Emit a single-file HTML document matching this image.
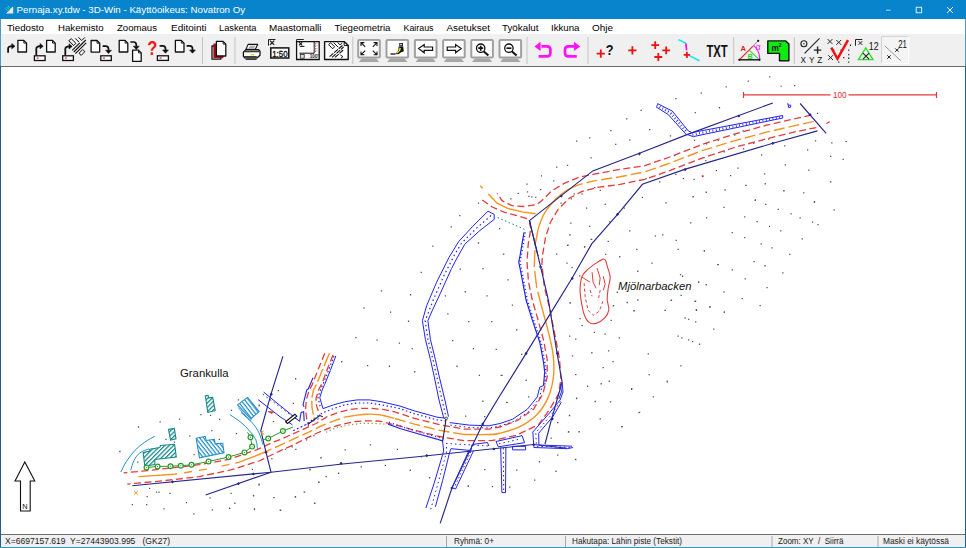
<!DOCTYPE html>
<html><head><meta charset="utf-8"><title>Pernaja.xy.tdw - 3D-Win</title>
<style>
html,body{margin:0;padding:0;background:#fff;overflow:hidden}
body{width:966px;height:548px;position:relative;font-family:"Liberation Sans",sans-serif}
#titlebar{position:absolute;left:0;top:0;width:966px;height:19px;background:#0884cd}
#menubar{position:absolute;left:1px;top:19px;width:964px;height:15px;background:#fff}
#toolbar{position:absolute;left:1px;top:34px;width:964px;height:32px;background:#f0f0f0;border-bottom:1px solid #6b6b6b}
#canvas{position:absolute;left:1px;top:67px;width:964px;height:467px;background:#fff}
#status{position:absolute;left:1px;top:534px;width:964px;height:13px;background:#f0f0f0;border-top:1px solid #6e6e6e}
#bl{position:absolute;left:0;top:19px;width:1px;height:529px;background:#1d5f85}
#bl2{position:absolute;left:0;top:19px;width:1px;height:47px;background:#4a9dc0}
#br{position:absolute;left:965px;top:19px;width:1px;height:529px;background:#1d5f85}
#br2{position:absolute;left:965px;top:19px;width:1px;height:47px;background:#4a9dc0}
#bb{position:absolute;left:0;top:547px;width:966px;height:1px;background:#2b97d0}
svg{position:absolute;left:0;top:0}
text{font-family:"Liberation Sans",sans-serif}
</style></head><body>
<div id="titlebar"></div><div id="menubar"></div><div id="toolbar"></div><div id="canvas"></div><div id="status"></div>
<div id="bl"></div><div id="bl2"></div><div id="br"></div><div id="br2"></div><div id="bb"></div>
<svg width="966" height="548" viewBox="0 0 966 548">
<defs>
<pattern id="hT" width="3.1" height="3.1" patternUnits="userSpaceOnUse" patternTransform="rotate(-45)"><rect width="3.1" height="1.25" fill="#188a8a"/></pattern>
<pattern id="hB" width="3.1" height="3.1" patternUnits="userSpaceOnUse" patternTransform="rotate(52)"><rect width="3.1" height="1.25" fill="#2490c8"/></pattern>
</defs>
<g id="map">
<polyline points="813.8,121.4 793.9,125.9 766.6,132.1 734.3,140.8 702,150.7 669.7,163.2 644.8,171.9 620,176.8 594,180.9 579.1,184.6" fill="none" stroke="#f39420" stroke-width="1.4" stroke-dasharray="11 4"/>
<path d="M579.1 184.6C576.6 185.8 568.8 188.9 564.2 192.0C559.7 195.1 555.3 199.2 551.8 203.2C548.3 207.1 545.4 211.3 543.1 215.7C540.8 220.0 538.9 227.0 538.1 229.3" fill="none" stroke="#f39420" stroke-width="1.4"/>
<polyline points="538.1,229.3 535.2,244.2 534.2,266.9 536.7,287.3 541.9,307.8" fill="none" stroke="#f39420" stroke-width="1.4" stroke-dasharray="17 4"/>
<path d="M541.9 307.8C543.2 312.7 547.8 329.1 549.7 337.3C551.6 345.5 552.8 350.5 553.4 357.1C554.0 363.7 554.2 370.4 553.4 377.0C552.6 383.6 551.1 390.7 548.4 396.9C545.7 403.1 542.0 409.3 537.3 414.3C532.5 419.3 526.1 423.6 519.9 426.7C513.7 429.8 505.2 431.9 500.0 433.2C494.8 434.5 494.9 434.3 488.9 434.5C482.9 434.7 468.2 434.5 464.1 434.5" fill="none" stroke="#f39420" stroke-width="1.4"/>
<polyline points="464.1,434.5 439.3,430.3 414.4,424.1 394.3,418.3" fill="none" stroke="#f39420" stroke-width="1.4" stroke-dasharray="11 4"/>
<path d="M394.3 418.3C391.8 417.7 383.9 415.5 379.4 414.8C374.8 414.1 371.1 414.1 367.0 414.2C362.9 414.3 356.6 415.3 354.5 415.5" fill="none" stroke="#f39420" stroke-width="1.4"/>
<polyline points="354.5,415.5 344.6,417.1 333.4,421.1 321,426 309.8,431.6 294.9,438.4 280,445.3 261.5,453.5" fill="none" stroke="#f39420" stroke-width="1.4" stroke-dasharray="11 4"/>
<polyline points="261.5,453.5 239.1,462.2" fill="none" stroke="#f39420" stroke-width="1.4"/>
<polyline points="239.1,462.2 211.8,468.4" fill="none" stroke="#f39420" stroke-width="1.4" stroke-dasharray="4 6 8 100"/>
<polyline points="211.8,468.4 174.5,474.2" fill="none" stroke="#f39420" stroke-width="1.4" stroke-dasharray="0 5 8 7 8 7 8 100"/>
<polyline points="174.5,474.2 138.5,476.6" fill="none" stroke="#f39420" stroke-width="1.4"/>
<polyline points="811.3,115.2 793.9,118.9 766.6,125.2 734.3,134.1 702,144.5 669.7,157 644.8,165.7 620,169.4 594,174.2 579.1,177.1 564.2,183.4 551.8,190.8 544.3,198.3 536.9,204.5 524.5,206.5 512,205.7 502.1,200.7 497.1,193.3" fill="none" stroke="#e53c3c" stroke-width="1.3" stroke-dasharray="7 3.5"/>
<polyline points="816.3,127.6 793.9,132.1 766.6,138.8 734.3,147.5 702,158.2 669.7,170.6 644.8,179.3 620,184.3 596.5,187.6 581.6,191.6 569.2,198.3 558,209.4 550.6,221.9 545.6,236.8 542.4,255.9 541.9,264.3 544.4,287.3 549.5,307.8 555.9,339.8 559.6,359.6 560.9,379.5 558.4,394.4 549.7,409.3 538.6,424.6 516.3,435.3 491.4,440.7 464.1,440.7 439.3,436.5 414.4,430.3 400,426 391.8,424.2 379.4,421.1 367,420.8 354.5,421.7 342.1,424.2 329.7,427.9 316,433.5 304.8,439.1 292.4,445.3 280,450.9 259,461 231.7,469.7 199.4,476.6 162.1,480.9 127.3,484.1" fill="none" stroke="#e53c3c" stroke-width="1.3" stroke-dasharray="7 3.5"/>
<polyline points="482.2,200 492.2,207 504.6,212.4 519.5,216.4 529.4,219.4 530.7,229.3 528.2,244.2 527,262 528.5,282 532.3,300 537.3,317.4 543.5,339.8 547.2,359.6 547.2,377 542.7,394.4 533.5,409.3 517.4,420.5 500,427 488.9,429.1 464.1,429.1 439.3,424.6 414.4,418.4 395.5,412.1 384.3,409.6 371.9,408.4 359.5,408.4 349.6,409.6 338.4,412.4 327.2,416.7 316,423.5 303.6,429.1 292.4,434.1 280,439.7 273.9,441.9 256.5,449.8 229.2,459.3 199.4,464.7 149.7,470.4 123.6,472.9" fill="none" stroke="#e53c3c" stroke-width="1.3" stroke-dasharray="7 3.5"/>
<polyline points="826.2,123.4 829.9,121.7" fill="none" stroke="#e53c3c" stroke-width="1.1"/>
<polyline points="480.2,185.8 482.7,188.3" fill="none" stroke="#f39420" stroke-width="1.4"/>
<polyline points="488.4,194 497.1,203.2 507.1,208.2 522,211.9 535.7,213.7" fill="none" stroke="#f39420" stroke-width="1.4"/>
<polyline points="538.1,255.9 529.4,220.6 592.8,170.9 638.8,153.5 688.3,134.1 772.8,103" fill="none" stroke="#26268c" stroke-width="1.15"/>
<polyline points="529.4,220.6 540.6,266.9 548.4,300 557.1,353.4 562.1,382 550.9,421.7 545,444" fill="none" stroke="#26268c" stroke-width="1.15"/>
<polyline points="817.5,130.9 772.8,143.3 684.6,169.4 642.4,184.3 617.6,214.4 591.7,243.9 572,278.2 550.8,312.9 526.1,353.4 497.2,400 482.7,424.1 452,487.8 440.2,523.4" fill="none" stroke="#26268c" stroke-width="1.15"/>
<polyline points="800.1,103.5 826.2,133.4" fill="none" stroke="#26268c" stroke-width="1.15"/>
<polyline points="132.3,485.8 271,472.2 340,464.2 420,456.5 533.7,444.5 567,448.3" fill="none" stroke="#26268c" stroke-width="1.15"/>
<polyline points="205.6,495 271,472.2" fill="none" stroke="#26268c" stroke-width="1.15"/>
<polyline points="282.9,356.3 271,394.2 260.8,430.5 266,452.4 271,472.2" fill="none" stroke="#26268c" stroke-width="1.15"/>
<polyline points="656,106.8 668.4,114.7 685.8,134.1 693.3,136.6 782.7,118 782.7,115.5 692,132.6 688.3,130.9 672.2,111 657.3,103.5" fill="none" stroke="#2424ea" stroke-width="1"/>
<polyline points="656.8,105.2 670.3,112.8 687.3,132.6" fill="none" stroke="#2424ea" stroke-width="2.6" stroke-dasharray="0.8 2.4"/>
<polyline points="692.5,134.7 782,116.8" fill="none" stroke="#2424ea" stroke-width="2.4" stroke-dasharray="0.8 2.6"/>
<polyline points="787.8,103.2 788.6,107.5 790.6,107.2 790.8,105.2 788.2,105" fill="none" stroke="#2424ea" stroke-width="1"/>
<polyline points="488,211.2 472.3,226.8 458.6,241.7 449,257.4 436.6,282.2 426.6,305.8 422.4,320.7 425.4,339.4 430.4,359.3 434.1,376 439,400 443.7,417.8" fill="none" stroke="#2424ea" stroke-width="1"/>
<polyline points="488,211.2 494.2,214.4 494.2,219.4 479.8,230.6 464.8,244.2 457,258 451.5,268.6 440.3,293.4 431.6,312 427.9,320.7 430.4,339.4 435.3,359.3 439.1,376 444.9,400 448.5,416.6" fill="none" stroke="#2424ea" stroke-width="1"/>
<polyline points="491,215.5 476,228.7 461.7,243 455.2,253.6 444,275.4 433.4,299.6 425.2,320.7 427.9,339.4 432.9,359.3 436.6,376 442,400 446.1,417.2" fill="none" stroke="#2424ea" stroke-width="1.2" stroke-dasharray="1.5 3"/>
<polyline points="497.6,217.6 524.5,229.3" fill="none" stroke="#188a8a" stroke-width="1" stroke-dasharray="1.5 2.5"/>
<polyline points="524,232.3 520,255.9 518.8,262 522.7,282.2 526.1,300 532.3,319.9 539.8,342.2 543.5,362.1 544.7,372 543.5,385.7" fill="none" stroke="#2424ea" stroke-width="1.2"/>
<polyline points="525.2,232.3 521.2,255.9 520,262 523.9,282.2 527.3,300 533.5,319.9 541,342.2 544.7,362.1 545.9,372 544.7,385.7" fill="none" stroke="#2424ea" stroke-width="1.6" stroke-dasharray="1 2.6"/>
<polyline points="543.5,385.7 539.8,387 537.3,396.9 527.3,409.3 512.4,419.3 500,423.5 488.9,425.8 469.1,425.1 449.7,422.6" fill="none" stroke="#2424ea" stroke-width="1"/>
<polyline points="541.5,388.5 539.6,398 529.5,411 514,421.4 500,426 488.9,428 469.1,427.5 449.7,425" fill="none" stroke="#2424ea" stroke-width="1" stroke-dasharray="1.5 3"/>
<polyline points="446.7,418.4 436.8,417.1 414.4,410.9 400,406.1 381.9,401.8 369.4,399.9 357,399.9 344.6,401.8 333.4,404.9 322.9,408.6 319.8,397.5 322.2,390 324.8,384.2 330.3,370.5 335.8,355.9" fill="none" stroke="#2424ea" stroke-width="1"/>
<polyline points="446,421 436.5,419.8 414,413.6 400,408.6 381.9,404.9 369.4,403 357,403 344.6,404.9 333.4,408.6 322.2,413 305,425 294,430.3" fill="none" stroke="#2424ea" stroke-width="1.2" stroke-dasharray="1.5 2.5"/>
<polyline points="334,356 328.5,370.5 323,384.2 320.5,390 318,397.5 320.5,408" fill="none" stroke="#2424ea" stroke-width="1.2" stroke-dasharray="1.5 2.5"/>
<polyline points="313,377.8 308.4,388.8 306.7,390 303,404.9 304.2,406.8" fill="none" stroke="#2424ea" stroke-width="1.1"/>
<polyline points="299.5,421.7 301.1,412.4 303.6,411.7 304.2,421.1" fill="none" stroke="#2424ea" stroke-width="1.1"/>
<polyline points="324.8,353.2 318.4,368.7 312,385.1 309.2,390 306.3,399.9 305.5,409.9 306.7,418.6 308.6,426" fill="none" stroke="#e53c3c" stroke-width="1.3" stroke-dasharray="7 3.5"/>
<polyline points="329.4,353.2 323,368.7 316.6,384.2 313.5,390 311.7,398.7 312,407.4 314.2,419.8" fill="none" stroke="#f39420" stroke-width="1.4" stroke-dasharray="14 3"/>
<polyline points="333,355 327.5,368.7 322.1,383.3 318.5,390 316,398.7 316.6,406.1 319.8,414.8" fill="none" stroke="#e53c3c" stroke-width="1.3" stroke-dasharray="7 3.5"/>
<polyline points="308,424.2 319.8,415.5 322.9,416.7" fill="none" stroke="#1a1a4a" stroke-width="1.1"/>
<polyline points="388.1,424.2 400,428.5 411.9,432 436.8,439 443,441.2" fill="none" stroke="#2424ea" stroke-width="1.3"/>
<polyline points="389.1,422.2 401,426.5 412.9,430 437.8,437 444,439.2" fill="none" stroke="#2424ea" stroke-width="1.4" stroke-dasharray="1 3"/>
<polyline points="326,432.2 335.9,427.9 347.1,425.4 359.5,423.5 371.9,423.3 386.8,424.2" fill="none" stroke="#8aa03a" stroke-width="1.2" stroke-dasharray="1.3 2.6"/>
<polyline points="446.1,419 442.6,441.5" fill="none" stroke="#1a1a4a" stroke-width="1.1"/>
<circle cx="446.3" cy="418.3" r="1.3" fill="#fff" stroke="#222" stroke-width=".8"/>
<polyline points="442.6,441.5 443.7,451 434.2,483.1 425.9,508" fill="none" stroke="#2424ea" stroke-width="1"/>
<polyline points="450.9,448.7 449.7,452.2 442.6,480.7 435.4,506.8" fill="none" stroke="#2424ea" stroke-width="1"/>
<polyline points="446.5,447 446.5,452 438.4,482 430,512" fill="none" stroke="#2424ea" stroke-width="1" stroke-dasharray="1.5 3"/>
<polyline points="450.9,448.7 471,450.5 472,444.5 487.5,442.5 488.8,446" fill="none" stroke="#2424ea" stroke-width="1"/>
<polyline points="446,443.5 488,446" fill="none" stroke="#2424ea" stroke-width="1" stroke-dasharray="1.5 3"/>
<polyline points="468.7,451 452,487.8 455.6,489 473.4,451" fill="none" stroke="#2424ea" stroke-width="1"/>
<polyline points="471,451.5 454,488" fill="none" stroke="#2424ea" stroke-width="1" stroke-dasharray="1.5 2.5"/>
<polyline points="500.7,447.5 501.9,492.6 505.5,492.6 505.9,447.5" fill="none" stroke="#2424ea" stroke-width="1"/>
<polyline points="503.3,448 503.7,492" fill="none" stroke="#2424ea" stroke-width="1" stroke-dasharray="1.5 3"/>
<polygon points="496,441.5 522.1,435.6 524.5,442.7 498.3,446.8" fill="none" stroke="#2424ea" stroke-width="1"/>
<polyline points="499,443.8 521,438.8" fill="none" stroke="#2424ea" stroke-width="1" stroke-dasharray="1.5 3"/>
<polygon points="512.6,446.3 525.6,446.3 525.6,449.9 512.6,449.9" fill="none" stroke="#2424ea" stroke-width="1"/>
<polyline points="560.1,400 549.4,413.1 532.8,432 533.9,447.5 567.2,448.7 573.1,447.5" fill="none" stroke="#2424ea" stroke-width="1"/>
<polyline points="561.2,402.4 552.9,416.6 538.7,433.2 538.9,445 572,446.2" fill="none" stroke="#2424ea" stroke-width="1"/>
<polyline points="560.5,401.5 551.2,415 535.8,432.6 536.4,446.3 570,447.4" fill="none" stroke="#2424ea" stroke-width="1" stroke-dasharray="1.5 3"/>
<polyline points="562.1,382 563,392 560.1,400" fill="none" stroke="#2424ea" stroke-width="1"/>
<polyline points="560.6,384 561.4,392 558.8,399" fill="none" stroke="#2424ea" stroke-width="1"/>
<polyline points="263.7,392.1 280,405.5 299.3,421.1" fill="none" stroke="#2424ea" stroke-width="1"/>
<polyline points="258.2,399.7 280,416.7 292.4,424.8" fill="none" stroke="#2424ea" stroke-width="1"/>
<polyline points="262.8,394.2 298.4,420.7" fill="none" stroke="#2424ea" stroke-width="1" stroke-dasharray="1.5 3"/>
<polyline points="292.9,430.7 320.2,418" fill="none" stroke="#2424ea" stroke-width="1" stroke-dasharray="1.5 3"/>
<polygon points="285.6,421.7 294.9,414.2 296.8,416.1 287.5,423.5" fill="#fff" stroke="#111" stroke-width="1.1"/>
<path d="M268 411.5l4 2 1.5-1.5z" fill="#e03030" stroke="#e03030" stroke-width=".8"/>
<path d="M261.5 432.5l2.5 1.5M261.5 432.5l2.3-1.5M261.5 432.5l1 3" stroke="#f39420" stroke-width="1" fill="none"/>
<path d="M134.2 491l3.6 3.6M137.8 491l-3.6 3.6" stroke="#f39420" stroke-width="1" fill="none"/>
<rect x="701.8" y="175.3" width="1.8" height="1.8" fill="#e02020"/>
<rect x="780.6" y="85.6" width="1.2" height="1.2" fill="#5050e0"/>
<polygon points="205.3,395.8 208.1,395.3 208.6,397.9 212.7,397.4 215.2,410.7 207.8,412.3" fill="url(#hT)" stroke="#188a8a" stroke-width="1.1"/>
<polygon points="237.6,404.9 247.5,397.4 259.1,411.5 250.8,419" fill="url(#hB)" stroke="#2490c8" stroke-width="1.1"/>
<polyline points="238.2,407.5 250,420.6 251.5,419.4" fill="none" stroke="#2490c8" stroke-width="1"/>
<polygon points="168.5,429.4 174.3,428.4 176,438.8 170.5,440" fill="url(#hT)" stroke="#188a8a" stroke-width="1.1"/>
<polygon points="143.2,452.6 149,451.3 149.8,449.3 159.7,447.6 160.5,445.5 174.6,444.3 176.3,457 154.8,459.5 154.8,464.5 144.8,466.2" fill="url(#hT)" stroke="#188a8a" stroke-width="1.1"/>
<polygon points="196.2,438.3 205.3,436.3 206.1,440.5 214.4,439.3 215.2,443.8 222.7,443.3 224,452.9 199.5,457.9" fill="url(#hB)" stroke="#2490c8" stroke-width="1.1"/>
<polyline points="144.8,467.8 157.2,466.5 170.5,466.2 180.8,465.7 191.5,464.8 208.6,461.5 228.5,457 244.5,452.4 252.1,446.6 250.5,437.2 247.5,432.2" fill="none" stroke="#2a9a2a" stroke-width="1"/>
<polyline points="262.8,439.8 268.3,438.4 282.9,431.1 292.9,427.1" fill="none" stroke="#2a9a2a" stroke-width="1"/>
<circle cx="146.5" cy="467.5" r="2.4" fill="#fff" stroke="#2a9a2a" stroke-width="1.2"/><circle cx="146.5" cy="467.5" r=".6" fill="#2a9a2a"/>
<circle cx="157.6" cy="466.5" r="2.4" fill="#fff" stroke="#2a9a2a" stroke-width="1.2"/><circle cx="157.6" cy="466.5" r=".6" fill="#2a9a2a"/>
<circle cx="170.5" cy="466.2" r="2.4" fill="#fff" stroke="#2a9a2a" stroke-width="1.2"/><circle cx="170.5" cy="466.2" r=".6" fill="#2a9a2a"/>
<circle cx="180.8" cy="465.7" r="2.4" fill="#fff" stroke="#2a9a2a" stroke-width="1.2"/><circle cx="180.8" cy="465.7" r=".6" fill="#2a9a2a"/>
<circle cx="191.5" cy="464.8" r="2.4" fill="#fff" stroke="#2a9a2a" stroke-width="1.2"/><circle cx="191.5" cy="464.8" r=".6" fill="#2a9a2a"/>
<circle cx="208.6" cy="461.5" r="2.4" fill="#fff" stroke="#2a9a2a" stroke-width="1.2"/><circle cx="208.6" cy="461.5" r=".6" fill="#2a9a2a"/>
<circle cx="228.5" cy="457" r="2.4" fill="#fff" stroke="#2a9a2a" stroke-width="1.2"/><circle cx="228.5" cy="457" r=".6" fill="#2a9a2a"/>
<circle cx="244.5" cy="452.4" r="2.4" fill="#fff" stroke="#2a9a2a" stroke-width="1.2"/><circle cx="244.5" cy="452.4" r=".6" fill="#2a9a2a"/>
<circle cx="252.1" cy="446.6" r="2.4" fill="#fff" stroke="#2a9a2a" stroke-width="1.2"/><circle cx="252.1" cy="446.6" r=".6" fill="#2a9a2a"/>
<circle cx="250.5" cy="437.2" r="2.4" fill="#fff" stroke="#2a9a2a" stroke-width="1.2"/><circle cx="250.5" cy="437.2" r=".6" fill="#2a9a2a"/>
<circle cx="268.2" cy="438.5" r="2.4" fill="#fff" stroke="#2a9a2a" stroke-width="1.2"/><circle cx="268.2" cy="438.5" r=".6" fill="#2a9a2a"/>
<circle cx="282.9" cy="431.1" r="2.4" fill="#fff" stroke="#2a9a2a" stroke-width="1.2"/><circle cx="282.9" cy="431.1" r=".6" fill="#2a9a2a"/>
<path d="M120.8 472C121.8 470.2 124.2 464.8 126.6 461.2C128.9 457.6 131.9 453.6 134.9 450.4C137.9 447.2 141.5 444.5 144.8 442.1C148.1 439.8 153.1 437.3 154.8 436.3" fill="none" stroke="#2490c8" stroke-width="1"/>
<path d="M130.7 470.3C131.2 468.6 132.5 463.3 134.0 460.4C135.5 457.5 137.3 454.8 139.8 452.9C142.3 451.0 147.5 449.5 149.0 448.8" fill="none" stroke="#2490c8" stroke-width="1"/>
<path d="M230.1 414.8C231.9 416.1 237.7 419.7 240.9 422.3C244.1 424.9 246.7 427.6 249.2 430.5C251.7 433.4 254.4 436.6 255.8 439.7C257.2 442.8 257.1 447.3 257.4 448.8" fill="none" stroke="#2490c8" stroke-width="1"/>
<path d="M240.9 412.3C242.8 414.1 249.5 419.7 252.5 423.1C255.5 426.6 257.4 429.4 259.1 433.0C260.8 436.6 262.3 442.7 262.9 444.6" fill="none" stroke="#2490c8" stroke-width="1"/>
<path d="M603.2 259.1C601.6 259.4 598.6 261.4 596.1 263.1C593.6 264.8 590.4 267.0 588.1 269.2C585.8 271.4 583.4 273.0 582.1 276.2C580.8 279.4 580.3 284.2 580.1 288.2C579.9 292.2 580.4 295.9 581.1 300.3C581.8 304.7 582.8 310.6 584.1 314.3C585.4 318.0 587.1 320.9 589.1 322.4C591.1 323.9 593.6 324.1 596.1 323.4C598.6 322.7 602.1 320.6 604.2 318.4C606.3 316.2 608.3 313.5 608.8 310.3C609.3 307.1 607.3 303.0 607.2 299.3C607.1 295.6 607.7 291.9 608.2 288.2C608.7 284.5 610.4 280.9 610.2 277.2C610.0 273.5 607.9 268.8 607.2 266.1C606.5 263.4 606.5 262.3 605.8 261.1C605.1 259.9 604.8 258.8 603.2 259.1Z" fill="none" stroke="#e53c3c" stroke-width="1.1"/>
<polyline points="584.1,283.2 585.1,296.3 588.1,310.3 593.1,315.3 599.2,311.3 603.2,300.3" fill="none" stroke="#e53c3c" stroke-width="1" stroke-dasharray="3 2.5"/>
<polyline points="592.1,272.2 593.1,282.2 596.1,288.2" fill="none" stroke="#e53c3c" stroke-width="1"/>
<polyline points="597.1,268.2 600.2,278.2 599.2,285.2" fill="none" stroke="#e53c3c" stroke-width="1"/>
<polyline points="603.2,276.2 605.2,284.2 603.2,290.2" fill="none" stroke="#e53c3c" stroke-width="1"/>
<polyline points="582.1,277.2 590.1,282.2" fill="none" stroke="#e53c3c" stroke-width="1"/>
<polyline points="590.1,290.2 592.1,296.3" fill="none" stroke="#e53c3c" stroke-width="1" stroke-dasharray="3 2"/>
<polyline points="600.2,290.2 598.2,300.3" fill="none" stroke="#e53c3c" stroke-width="1" stroke-dasharray="3 2"/>
<polyline points="743.5,94.8 830.5,94.8" fill="none" stroke="#e03a3a" stroke-width="1.2"/>
<polyline points="848.5,94.8 936.5,94.8" fill="none" stroke="#e03a3a" stroke-width="1.2"/>
<polyline points="743.5,92 743.5,98" fill="none" stroke="#e03a3a" stroke-width="1.2"/>
<polyline points="936.5,92 936.5,98" fill="none" stroke="#e03a3a" stroke-width="1.2"/>
<path d="M24.8 462L15 481H20.5V511H30.2V481H34.8Z" fill="none" stroke="#111" stroke-width="1.1"/>
<path d="M639.4 152.2l1.6 1.6l-1.6 1.6l-1.6-1.6zM738.8 114.4l1.6 1.6l-1.6 1.6l-1.6-1.6zM685.1 168l1.6 1.6l-1.6 1.6l-1.6-1.6zM772.8 141.7l1.6 1.6l-1.6 1.6l-1.6-1.6zM810 113.1l1.6 1.6l-1.6 1.6l-1.6-1.6zM561.3 194.4l1.6 1.6l-1.6 1.6l-1.6-1.6zM617.5 212.7l1.6 1.6l-1.6 1.6l-1.6-1.6zM540.6 265.3l1.6 1.6l-1.6 1.6l-1.6-1.6zM572.3 276.7l1.6 1.6l-1.6 1.6l-1.6-1.6zM526.1 351.8l1.6 1.6l-1.6 1.6l-1.6-1.6zM557.4 351.8l1.6 1.6l-1.6 1.6l-1.6-1.6zM341.1 461.7l1.6 1.6l-1.6 1.6l-1.6-1.6zM426.8 454l1.6 1.6l-1.6 1.6l-1.6-1.6zM469 449.8l1.6 1.6l-1.6 1.6l-1.6-1.6zM493.9 447.4l1.6 1.6l-1.6 1.6l-1.6-1.6zM482.7 422.5l1.6 1.6l-1.6 1.6l-1.6-1.6zM451.9 486.4l1.6 1.6l-1.6 1.6l-1.6-1.6zM552.3 417.3l1.6 1.6l-1.6 1.6l-1.6-1.6zM533.7 442.9l1.6 1.6l-1.6 1.6l-1.6-1.6zM172.5 480.2l1.6 1.6l-1.6 1.6l-1.6-1.6zM238.4 482.1l1.6 1.6l-1.6 1.6l-1.6-1.6zM253.3 472.4l1.6 1.6l-1.6 1.6l-1.6-1.6zM266 450.7l1.6 1.6l-1.6 1.6l-1.6-1.6zM271.3 392.6l1.6 1.6l-1.6 1.6l-1.6-1.6z" fill="#26268c"/>
<path d="M119.2 451h1.3v1.3h-1.3zM119.3 450.7h1.3v1.3h-1.3zM131.7 503.9h1.3v1.3h-1.3zM137.2 461.4h1.3v1.3h-1.3zM137.8 426.4h1.3v1.3h-1.3zM138 426.2h1.3v1.3h-1.3zM146 503.9h1.3v1.3h-1.3zM146.5 495.9h1.3v1.3h-1.3zM149 487.7h1.3v1.3h-1.3zM155.9 491.4h1.3v1.3h-1.3zM158.4 491.4h1.3v1.3h-1.3zM159.5 421.2h1.3v1.3h-1.3zM163.4 508.2h1.3v1.3h-1.3zM165.3 438.7h1.3v1.3h-1.3zM169.4 492.7h1.3v1.3h-1.3zM173.7 441.5h1.3v1.3h-1.3zM178.9 418.4h1.3v1.3h-1.3zM185.8 501.9h1.3v1.3h-1.3zM189.2 435.4h1.3v1.3h-1.3zM193.2 513.2h1.3v1.3h-1.3zM193.5 454h1.3v1.3h-1.3zM200.2 413.9h1.3v1.3h-1.3zM209.4 497.2h1.3v1.3h-1.3zM209.9 414.7h1.3v1.3h-1.3zM211.2 429.9h1.3v1.3h-1.3zM211.7 509.2h1.3v1.3h-1.3zM218.7 438.7h1.3v1.3h-1.3zM219 418.7h1.3v1.3h-1.3zM229 507.6h1.3v1.3h-1.3zM230.5 492.7h1.3v1.3h-1.3zM230.8 409.7h1.3v1.3h-1.3zM234.2 502.6h1.3v1.3h-1.3zM235.8 432.9h1.3v1.3h-1.3zM237.8 399.2h1.3v1.3h-1.3zM251.8 468.7h1.3v1.3h-1.3zM252.8 494.7h1.3v1.3h-1.3zM253 495.2h1.3v1.3h-1.3zM253.8 508.9h1.3v1.3h-1.3zM253.8 508.2h1.3v1.3h-1.3zM258.4 484.5h1.3v1.3h-1.3zM258.5 405.1h1.3v1.3h-1.3zM258.5 483.6h1.3v1.3h-1.3zM258.6 404.6h1.3v1.3h-1.3zM271.2 458h1.3v1.3h-1.3zM272.8 421h1.3v1.3h-1.3zM273.2 496.9h1.3v1.3h-1.3zM273.4 497h1.3v1.3h-1.3zM277.7 390h1.3v1.3h-1.3zM279.6 509.6h1.3v1.3h-1.3zM280 509.6h1.3v1.3h-1.3zM284.9 448.8h1.3v1.3h-1.3zM291.6 446.2h1.3v1.3h-1.3zM292.7 402.8h1.3v1.3h-1.3zM294.6 496h1.3v1.3h-1.3zM294.9 496.4h1.3v1.3h-1.3zM295 378.1h1.3v1.3h-1.3zM295.2 448.8h1.3v1.3h-1.3zM303.6 491.4h1.3v1.3h-1.3zM304 491.5h1.3v1.3h-1.3zM306 439.2h1.3v1.3h-1.3zM309.2 469.1h1.3v1.3h-1.3zM309.5 468.7h1.3v1.3h-1.3zM313.2 434.9h1.3v1.3h-1.3zM313.9 502.7h1.3v1.3h-1.3zM314.2 502.6h1.3v1.3h-1.3zM318 481.5h1.3v1.3h-1.3zM318.4 481.6h1.3v1.3h-1.3zM320.1 457.2h1.3v1.3h-1.3zM320.5 457.2h1.3v1.3h-1.3zM325.5 476h1.3v1.3h-1.3zM325.6 475.9h1.3v1.3h-1.3zM337.9 472.8h1.3v1.3h-1.3zM338 472.4h1.3v1.3h-1.3zM341.1 361.1h1.3v1.3h-1.3zM344.5 449.2h1.3v1.3h-1.3zM355.2 337h1.3v1.3h-1.3zM360.6 466.2h1.3v1.3h-1.3zM363.4 307.2h1.3v1.3h-1.3zM366.9 364.9h1.3v1.3h-1.3zM369.8 444.2h1.3v1.3h-1.3zM376.4 339.5h1.3v1.3h-1.3zM380.8 290.2h1.3v1.3h-1.3zM384.7 464.7h1.3v1.3h-1.3zM388.8 365.6h1.3v1.3h-1.3zM390 311.4h1.3v1.3h-1.3zM396.7 448.8h1.3v1.3h-1.3zM398.7 342.5h1.3v1.3h-1.3zM407.9 320.6h1.3v1.3h-1.3zM409.6 469.6h1.3v1.3h-1.3zM409.9 294.1h1.3v1.3h-1.3zM411.6 348h1.3v1.3h-1.3zM414.1 371.1h1.3v1.3h-1.3zM420.6 271.7h1.3v1.3h-1.3zM420.8 456.2h1.3v1.3h-1.3zM428.9 477h1.3v1.3h-1.3zM429 477.1h1.3v1.3h-1.3zM432.2 245.5h1.3v1.3h-1.3zM444.7 295.2h1.3v1.3h-1.3zM447.2 313.2h1.3v1.3h-1.3zM450.6 226.2h1.3v1.3h-1.3zM452.1 340h1.3v1.3h-1.3zM456.4 365.6h1.3v1.3h-1.3zM459.2 215h1.3v1.3h-1.3zM459.6 268.5h1.3v1.3h-1.3zM464.6 291.1h1.3v1.3h-1.3zM465 415.5h1.3v1.3h-1.3zM467.5 485.2h1.3v1.3h-1.3zM467.6 485.6h1.3v1.3h-1.3zM468.2 320.9h1.3v1.3h-1.3zM472.8 348h1.3v1.3h-1.3zM477.7 242.5h1.3v1.3h-1.3zM477.9 202.5h1.3v1.3h-1.3zM477.9 242.3h1.3v1.3h-1.3zM478.7 374.8h1.3v1.3h-1.3zM482.2 400.6h1.3v1.3h-1.3zM482.4 268h1.3v1.3h-1.3zM484 416h1.3v1.3h-1.3zM484.2 469h1.3v1.3h-1.3zM486.4 295.2h1.3v1.3h-1.3zM491.1 320.9h1.3v1.3h-1.3zM491.8 486h1.3v1.3h-1.3zM495.6 348.7h1.3v1.3h-1.3zM499 227.9h1.3v1.3h-1.3zM500.6 374.8h1.3v1.3h-1.3zM501.4 374.7h1.3v1.3h-1.3zM502.8 253.5h1.3v1.3h-1.3zM503.1 253.5h1.3v1.3h-1.3zM506 401.8h1.3v1.3h-1.3zM506.4 402h1.3v1.3h-1.3zM507.5 279.2h1.3v1.3h-1.3zM509.1 486.5h1.3v1.3h-1.3zM510.2 198.3h1.3v1.3h-1.3zM511.8 304.4h1.3v1.3h-1.3zM511.8 304.5h1.3v1.3h-1.3zM516 329.2h1.3v1.3h-1.3zM516.2 329.2h1.3v1.3h-1.3zM516.2 469.4h1.3v1.3h-1.3zM517.6 192.7h1.3v1.3h-1.3zM521 353.7h1.3v1.3h-1.3zM525.5 379.6h1.3v1.3h-1.3zM526.4 183.4h1.3v1.3h-1.3zM526.9 191.3h1.3v1.3h-1.3zM528 396.2h1.3v1.3h-1.3zM528.2 195.8h1.3v1.3h-1.3zM531.2 196.3h1.3v1.3h-1.3zM534.1 479.4h1.3v1.3h-1.3zM535.1 196.8h1.3v1.3h-1.3zM538.8 461.1h1.3v1.3h-1.3zM540 188.9h1.3v1.3h-1.3zM540.8 175.2h1.3v1.3h-1.3zM550.6 437.4h1.3v1.3h-1.3zM553.1 180.2h1.3v1.3h-1.3zM555.4 470.6h1.3v1.3h-1.3zM556.1 166.5h1.3v1.3h-1.3zM556.1 253.5h1.3v1.3h-1.3zM557 421.9h1.3v1.3h-1.3zM557.1 422h1.3v1.3h-1.3zM557.1 454.5h1.3v1.3h-1.3zM560.4 202.5h1.3v1.3h-1.3zM566.4 262.5h1.3v1.3h-1.3zM566.9 164.8h1.3v1.3h-1.3zM566.9 244.8h1.3v1.3h-1.3zM567.4 244.4h1.3v1.3h-1.3zM567.8 431.4h1.3v1.3h-1.3zM568.1 431.1h1.3v1.3h-1.3zM568.1 431.1h1.3v1.3h-1.3zM568.8 414.9h1.3v1.3h-1.3zM569 335.4h1.3v1.3h-1.3zM569 414.8h1.3v1.3h-1.3zM569 414.9h1.3v1.3h-1.3zM569.1 234.2h1.3v1.3h-1.3zM569.4 234.3h1.3v1.3h-1.3zM569.4 302.1h1.3v1.3h-1.3zM569.5 302.4h1.3v1.3h-1.3zM570.2 222.4h1.3v1.3h-1.3zM570.6 198.2h1.3v1.3h-1.3zM571.4 267h1.3v1.3h-1.3zM571.9 355.2h1.3v1.3h-1.3zM573.6 193.2h1.3v1.3h-1.3zM574.9 458.7h1.3v1.3h-1.3zM575.1 458.9h1.3v1.3h-1.3zM575.1 338.4h1.3v1.3h-1.3zM575.1 373.9h1.3v1.3h-1.3zM575.9 398h1.3v1.3h-1.3zM576 140.4h1.3v1.3h-1.3zM576 397.5h1.3v1.3h-1.3zM578.4 431.1h1.3v1.3h-1.3zM578.5 431.1h1.3v1.3h-1.3zM579.1 275.2h1.3v1.3h-1.3zM579.4 318h1.3v1.3h-1.3zM581.4 325h1.3v1.3h-1.3zM581.5 193.2h1.3v1.3h-1.3zM583.9 246.4h1.3v1.3h-1.3zM584.1 246h1.3v1.3h-1.3zM586 207.5h1.3v1.3h-1.3zM586.9 385.6h1.3v1.3h-1.3zM589.1 137.2h1.3v1.3h-1.3zM589.1 225.7h1.3v1.3h-1.3zM590.5 157.3h1.3v1.3h-1.3zM590.5 238.8h1.3v1.3h-1.3zM591 238.7h1.3v1.3h-1.3zM591.2 352.1h1.3v1.3h-1.3zM593.8 331.7h1.3v1.3h-1.3zM594.1 186.9h1.3v1.3h-1.3zM594.6 400.8h1.3v1.3h-1.3zM594.6 401h1.3v1.3h-1.3zM599.5 418.2h1.3v1.3h-1.3zM599.6 189.7h1.3v1.3h-1.3zM599.6 418.2h1.3v1.3h-1.3zM600.5 383.1h1.3v1.3h-1.3zM602.5 367h1.3v1.3h-1.3zM604.5 333.4h1.3v1.3h-1.3zM604.6 203.8h1.3v1.3h-1.3zM605.1 253.8h1.3v1.3h-1.3zM607.6 240.8h1.3v1.3h-1.3zM608 350.2h1.3v1.3h-1.3zM608.6 380.6h1.3v1.3h-1.3zM609.1 221.2h1.3v1.3h-1.3zM609.8 401.2h1.3v1.3h-1.3zM610 401.2h1.3v1.3h-1.3zM610.2 130h1.3v1.3h-1.3zM610.5 319.8h1.3v1.3h-1.3zM612.4 361h1.3v1.3h-1.3zM612.6 305.2h1.3v1.3h-1.3zM612.9 304.9h1.3v1.3h-1.3zM615.1 143.7h1.3v1.3h-1.3zM616.6 291.6h1.3v1.3h-1.3zM618.6 337.2h1.3v1.3h-1.3zM619.1 256.1h1.3v1.3h-1.3zM621.1 426.1h1.3v1.3h-1.3zM621.5 425.9h1.3v1.3h-1.3zM623.6 207.5h1.3v1.3h-1.3zM626.1 118.2h1.3v1.3h-1.3zM626.6 301.9h1.3v1.3h-1.3zM626.6 301.7h1.3v1.3h-1.3zM629.1 230.3h1.3v1.3h-1.3zM629.2 139.4h1.3v1.3h-1.3zM631 388.6h1.3v1.3h-1.3zM631.1 388.1h1.3v1.3h-1.3zM633.2 310.2h1.3v1.3h-1.3zM633.6 310.1h1.3v1.3h-1.3zM636.2 248.8h1.3v1.3h-1.3zM637.1 270.6h1.3v1.3h-1.3zM637.1 299.2h1.3v1.3h-1.3zM637.2 299.4h1.3v1.3h-1.3zM638.5 411.9h1.3v1.3h-1.3zM638.9 411.7h1.3v1.3h-1.3zM640.5 109.8h1.3v1.3h-1.3zM641.8 196.8h1.3v1.3h-1.3zM645.5 177.9h1.3v1.3h-1.3zM647.6 353.2h1.3v1.3h-1.3zM648.5 373.9h1.3v1.3h-1.3zM649.1 128.9h1.3v1.3h-1.3zM651.4 262.5h1.3v1.3h-1.3zM652.6 396.2h1.3v1.3h-1.3zM652.6 396.2h1.3v1.3h-1.3zM654.8 235.3h1.3v1.3h-1.3zM659.1 181.2h1.3v1.3h-1.3zM662.1 234.3h1.3v1.3h-1.3zM664.4 309.7h1.3v1.3h-1.3zM664.6 309.8h1.3v1.3h-1.3zM665.4 202.2h1.3v1.3h-1.3zM666.6 380.6h1.3v1.3h-1.3zM666.6 381.1h1.3v1.3h-1.3zM669.8 135.2h1.3v1.3h-1.3zM670.4 299.7h1.3v1.3h-1.3zM670.8 299.4h1.3v1.3h-1.3zM674.1 155h1.3v1.3h-1.3zM675.2 97.9h1.3v1.3h-1.3zM675.2 173.7h1.3v1.3h-1.3zM675.5 239.8h1.3v1.3h-1.3zM677.5 248.8h1.3v1.3h-1.3zM677.5 335.4h1.3v1.3h-1.3zM679.9 274h1.3v1.3h-1.3zM680.2 365.2h1.3v1.3h-1.3zM680.5 294.7h1.3v1.3h-1.3zM681.2 337.2h1.3v1.3h-1.3zM681.9 275.6h1.3v1.3h-1.3zM682.8 177.9h1.3v1.3h-1.3zM684.5 317.2h1.3v1.3h-1.3zM688.1 318.8h1.3v1.3h-1.3zM688.1 339.2h1.3v1.3h-1.3zM690.1 222.3h1.3v1.3h-1.3zM691.9 340.9h1.3v1.3h-1.3zM692.4 196.2h1.3v1.3h-1.3zM692.6 196h1.3v1.3h-1.3zM693.4 178.7h1.3v1.3h-1.3zM693.9 139.7h1.3v1.3h-1.3zM694.4 300.6h1.3v1.3h-1.3zM694.6 112h1.3v1.3h-1.3zM694.9 300.6h1.3v1.3h-1.3zM694.9 300.7h1.3v1.3h-1.3zM695.1 321.2h1.3v1.3h-1.3zM695.6 309.1h1.3v1.3h-1.3zM695.6 309.2h1.3v1.3h-1.3zM695.9 309.7h1.3v1.3h-1.3zM698 281.6h1.3v1.3h-1.3zM698.1 281.2h1.3v1.3h-1.3zM698.9 343.6h1.3v1.3h-1.3zM700.6 92.4h1.3v1.3h-1.3zM703.6 250h1.3v1.3h-1.3zM703.8 250.4h1.3v1.3h-1.3zM705.1 160h1.3v1.3h-1.3zM705.5 191.8h1.3v1.3h-1.3zM705.5 284.2h1.3v1.3h-1.3zM705.6 191.5h1.3v1.3h-1.3zM705.6 284h1.3v1.3h-1.3zM705.9 143.3h1.3v1.3h-1.3zM706 217.2h1.3v1.3h-1.3zM709.2 306.1h1.3v1.3h-1.3zM709.2 306.4h1.3v1.3h-1.3zM709.6 306.2h1.3v1.3h-1.3zM713.1 328.5h1.3v1.3h-1.3zM715.8 169.9h1.3v1.3h-1.3zM717.1 263.9h1.3v1.3h-1.3zM717.5 139.7h1.3v1.3h-1.3zM717.6 263.9h1.3v1.3h-1.3zM718.8 107.1h1.3v1.3h-1.3zM723.4 206.7h1.3v1.3h-1.3zM723.4 291.2h1.3v1.3h-1.3zM723.6 151.3h1.3v1.3h-1.3zM723.6 311.2h1.3v1.3h-1.3zM723.6 311.8h1.3v1.3h-1.3zM724.5 189.3h1.3v1.3h-1.3zM724.6 189.2h1.3v1.3h-1.3zM725.5 86.2h1.3v1.3h-1.3zM730 174.9h1.3v1.3h-1.3zM731.6 232h1.3v1.3h-1.3zM731.6 269.2h1.3v1.3h-1.3zM734.1 134.4h1.3v1.3h-1.3zM737.4 167.4h1.3v1.3h-1.3zM741.6 297.9h1.3v1.3h-1.3zM742.4 130.2h1.3v1.3h-1.3zM742.9 148.3h1.3v1.3h-1.3zM744.1 216.2h1.3v1.3h-1.3zM744.1 236.9h1.3v1.3h-1.3zM744.6 278.2h1.3v1.3h-1.3zM745.2 184.8h1.3v1.3h-1.3zM745.4 184.8h1.3v1.3h-1.3zM747.8 80.5h1.3v1.3h-1.3zM753.1 142.7h1.3v1.3h-1.3zM753.5 260.9h1.3v1.3h-1.3zM754.5 199.8h1.3v1.3h-1.3zM754.8 199.2h1.3v1.3h-1.3zM756.5 221h1.3v1.3h-1.3zM759.5 304.9h1.3v1.3h-1.3zM760.5 243.2h1.3v1.3h-1.3zM761 154.3h1.3v1.3h-1.3zM764 173.2h1.3v1.3h-1.3zM764.4 265.1h1.3v1.3h-1.3zM764.6 183h1.3v1.3h-1.3zM764.6 183.2h1.3v1.3h-1.3zM765.1 203.7h1.3v1.3h-1.3zM766.4 287h1.3v1.3h-1.3zM768 138.4h1.3v1.3h-1.3zM768.9 225.8h1.3v1.3h-1.3zM769.1 76.3h1.3v1.3h-1.3zM771.4 247.2h1.3v1.3h-1.3zM777.6 208.7h1.3v1.3h-1.3zM780.1 230.2h1.3v1.3h-1.3zM782.2 272.2h1.3v1.3h-1.3zM783.1 190h1.3v1.3h-1.3zM783.4 190.3h1.3v1.3h-1.3zM784.1 145.2h1.3v1.3h-1.3zM784.6 164.2h1.3v1.3h-1.3zM789.2 253.8h1.3v1.3h-1.3zM790.5 213.3h1.3v1.3h-1.3zM794.1 85h1.3v1.3h-1.3zM799.5 217.2h1.3v1.3h-1.3zM801.6 238.2h1.3v1.3h-1.3zM803.2 192.3h1.3v1.3h-1.3zM807 149.3h1.3v1.3h-1.3zM808.1 169.4h1.3v1.3h-1.3zM811.9 221.5h1.3v1.3h-1.3zM813.6 201.8h1.3v1.3h-1.3zM813.9 201h1.3v1.3h-1.3zM814.9 140.2h1.3v1.3h-1.3zM816.9 112.8h1.3v1.3h-1.3zM817.4 224h1.3v1.3h-1.3zM829.8 181.3h1.3v1.3h-1.3zM830.1 155.8h1.3v1.3h-1.3zM830.1 181.2h1.3v1.3h-1.3zM831.2 142.2h1.3v1.3h-1.3zM833.5 209.2h1.3v1.3h-1.3zM842.5 158.8h1.3v1.3h-1.3zM845.5 140.9h1.3v1.3h-1.3z" fill="#585858"/>
<text x="180" y="376.6" font-size="11.2" fill="#111" textLength="48.5" lengthAdjust="spacingAndGlyphs">Grankulla</text>
<text x="618" y="289.7" font-size="11.2" font-style="italic" fill="#111" textLength="73.5" lengthAdjust="spacingAndGlyphs">Mjölnarbacken</text>
<text x="833" y="98.2" font-size="9" fill="#d83030" textLength="13.6" lengthAdjust="spacingAndGlyphs">100</text>
<text x="22.2" y="509" font-size="7.4" fill="#111">N</text>
</g>
<g id="chrome">
<text x="16.6" y="13.4" font-size="9.7" fill="#fff" textLength="228.5" lengthAdjust="spacingAndGlyphs">Pernaja.xy.tdw - 3D-Win - Käyttöoikeus: Novatron Oy</text>
<g font-size="9.6" fill="#000"><text x="7" y="30.7" textLength="37" lengthAdjust="spacingAndGlyphs">Tiedosto</text><text x="58" y="30.7" textLength="45.5" lengthAdjust="spacingAndGlyphs">Hakemisto</text><text x="117" y="30.7" textLength="40" lengthAdjust="spacingAndGlyphs">Zoomaus</text><text x="171" y="30.7" textLength="35.5" lengthAdjust="spacingAndGlyphs">Editointi</text><text x="219" y="30.7" textLength="37.5" lengthAdjust="spacingAndGlyphs">Laskenta</text><text x="269" y="30.7" textLength="52.5" lengthAdjust="spacingAndGlyphs">Maastomalli</text><text x="334.5" y="30.7" textLength="56" lengthAdjust="spacingAndGlyphs">Tiegeometria</text><text x="403.5" y="30.7" textLength="30" lengthAdjust="spacingAndGlyphs">Kairaus</text><text x="446.5" y="30.7" textLength="43.5" lengthAdjust="spacingAndGlyphs">Asetukset</text><text x="502" y="30.7" textLength="36.5" lengthAdjust="spacingAndGlyphs">Työkalut</text><text x="551" y="30.7" textLength="28.5" lengthAdjust="spacingAndGlyphs">Ikkuna</text><text x="592" y="30.7" textLength="21" lengthAdjust="spacingAndGlyphs">Ohje</text></g>
<g font-size="9.2" fill="#1a1a1a">
<text x="5" y="544" textLength="165" lengthAdjust="spacingAndGlyphs" xml:space="preserve">X=6697157.619  Y=27443903.995   (GK27)</text>
<text x="454" y="544" textLength="40" lengthAdjust="spacingAndGlyphs">Ryhmä: 0+</text>
<text x="572" y="544" textLength="110" lengthAdjust="spacingAndGlyphs">Hakutapa: Lähin piste (Tekstit)</text>
<text x="778" y="544" textLength="65.5" lengthAdjust="spacingAndGlyphs" xml:space="preserve">Zoom: XY  /  Siirrä</text>
<text x="883" y="544" textLength="66" lengthAdjust="spacingAndGlyphs">Maski ei käytössä</text>
</g>
<path d="M446.5 536v11M565.5 536v11M772 536v11M878 536v11" stroke="#a8a8a8" stroke-width="1"/>
<path d="M886 10.2h4.6" stroke="#fff" stroke-width="1" opacity=".7"/>
<rect x="916.2" y="7.3" width="5.4" height="5.4" fill="none" stroke="#fff" stroke-width="1" opacity=".85"/>
<path d="M947 7l6 6M953 7l-6 6" stroke="#fff" stroke-width="1" opacity=".9"/>
<path d="M6 13.5L13.2 6.3V13.5Z" fill="#f3e6d6"/><path d="M5.3 8.5l3 3M6.5 7l3.2 3.2M8 6l3 3" stroke="#19d0c0" stroke-width=".9"/>
<path d="M202.5 37v27M235 37v27M352.8 37v27M527 37v27M588 37v27M733.7 37v27M794.4 37v27" stroke="#c4c4c4" stroke-width="1"/>
<path d="M8.1 52.8V48.8Q8.1 46.2 12.1 46.2" fill="none" stroke="#111" stroke-width="1.8"/><path d="M11.8 43.6l3.2 2.6l-3.2 2.6z" fill="#111" stroke="#111" stroke-width=".6"/>
<path d="M17.9 40.4h5.9l2.7 2.7v8.9h-8.6z" fill="#fff" stroke="#111" stroke-width="1.3" stroke-linejoin="round"/><path d="M23.8 40.4v2.7h2.7" fill="none" stroke="#111" stroke-width=".9"/>
<path d="M36.3 55.5V48.8Q36.3 46.2 40.3 46.2" fill="none" stroke="#111" stroke-width="1.8"/><path d="M40 43.6l3.2 2.6l-3.2 2.6z" fill="#111" stroke="#111" stroke-width=".6"/>
<path d="M46.6 40.4h5.9l2.7 2.7v8.9h-8.6z" fill="#fff" stroke="#111" stroke-width="1.3" stroke-linejoin="round"/><path d="M52.5 40.4v2.7h2.7" fill="none" stroke="#111" stroke-width=".9"/>
<rect x="34.4" y="55.8" width="10.7" height="4.7" fill="#fff" stroke="#111" stroke-width="1.3"/><rect x="36.6" y="57.5" width="2" height="1.1" fill="#e0103a"/>
<path d="M65.3 55.5V49Q65.3 46.4 69.3 46.4" fill="none" stroke="#111" stroke-width="1.8"/><path d="M69 43.8l3.2 2.6l-3.2 2.6z" fill="#111" stroke="#111" stroke-width=".6"/>
<rect x="62.7" y="55.8" width="10.7" height="4.7" fill="#fff" stroke="#111" stroke-width="1.3"/><rect x="64.9" y="57.5" width="2" height="1.1" fill="#e0103a"/>
<g stroke="#111" stroke-width="1" fill="none"><path d="M68.7 40.8l2.5-2.1l4.7 4.6l-2.2 2.2z"/><path d="M75.3 38.4l3.7 3.7M78.4 37.4l3.4 3.1l3.1-3.1"/><path d="M72.2 50.4L79.8 42.8M73.8 52L85.8 40M75.4 53.6L86.2 42.8" stroke-width="1.1"/><path d="M79 53.3l3.7-3.8l2.2 2.2l-3.7 3.7z"/></g>
<path d="M91.1 40.5h5.9l2.7 2.7v8.9h-8.6z" fill="#fff" stroke="#111" stroke-width="1.3" stroke-linejoin="round"/><path d="M97 40.5v2.7h2.7" fill="none" stroke="#111" stroke-width=".9"/>
<path d="M102.6 46.1h3.2Q108.5 46.1 108.5 49.1V50.7" fill="none" stroke="#111" stroke-width="1.7"/><path d="M105.6 50.3h5.8l-2.9 3.2z" fill="#111" stroke="#111" stroke-width=".6"/>
<rect x="100.8" y="55.8" width="10.5" height="4.7" fill="#fff" stroke="#111" stroke-width="1.3"/><rect x="103" y="57.5" width="2" height="1.1" fill="#e0103a"/>
<path d="M119.2 40.4h5.9l2.7 2.7v8.9h-8.6z" fill="#fff" stroke="#111" stroke-width="1.3" stroke-linejoin="round"/><path d="M125.1 40.4v2.7h2.7" fill="none" stroke="#111" stroke-width=".9"/>
<path d="M130.4 42h3.2Q136.3 42 136.3 45V46.6" fill="none" stroke="#111" stroke-width="1.7"/><path d="M133.4 46.2h5.8l-2.9 3.2z" fill="#111" stroke="#111" stroke-width=".6"/>
<path d="M132.6 50.2h5.9l2.7 2.7v8.5h-8.6z" fill="#fff" stroke="#111" stroke-width="1.3" stroke-linejoin="round"/><path d="M138.5 50.2v2.7h2.7" fill="none" stroke="#111" stroke-width=".9"/>
<text x="147.2" y="55" font-size="20" font-weight="bold" fill="#f01818" textLength="10" lengthAdjust="spacingAndGlyphs">?</text>
<path d="M159.6 45.8h3.2Q165.5 45.8 165.5 48.8V50.4" fill="none" stroke="#111" stroke-width="1.7"/><path d="M162.6 50h5.8l-2.9 3.2z" fill="#111" stroke="#111" stroke-width=".6"/>
<rect x="157.4" y="55.8" width="11" height="4.6" fill="#fff" stroke="#111" stroke-width="1.3"/><rect x="159.6" y="57.5" width="2" height="1.1" fill="#e0103a"/>
<path d="M175.4 40.4h5.9l2.7 2.7v8.9h-8.6z" fill="#fff" stroke="#111" stroke-width="1.3" stroke-linejoin="round"/><path d="M181.3 40.4v2.7h2.7" fill="none" stroke="#111" stroke-width=".9"/>
<path d="M186.6 45.8h3.2Q192.5 45.8 192.5 48.8V50.4" fill="none" stroke="#111" stroke-width="1.7"/><path d="M189.6 50h5.8l-2.9 3.2z" fill="#111" stroke="#111" stroke-width=".6"/>
<path d="M212 46h6.1l2.7 2.7v10.5h-8.8z" fill="#fff" stroke="#111" stroke-width="1.3" stroke-linejoin="round"/><path d="M218.1 46v2.7h2.7" fill="none" stroke="#111" stroke-width=".9"/>
<path d="M214 44.2h6.1l2.7 2.7v10.7h-8.8z" fill="#a01010" stroke="#a01010" stroke-width="1.3" stroke-linejoin="round"/><path d="M220.1 44.2v2.7h2.7" fill="none" stroke="#a01010" stroke-width=".9"/>
<path d="M216.4 41.4h6.7l2.7 2.7v11.9h-9.4z" fill="#fff" stroke="#111" stroke-width="1.3" stroke-linejoin="round"/><path d="M223.1 41.4v2.7h2.7" fill="none" stroke="#111" stroke-width=".9"/>
<path d="M248.1 44.4h9.6l-2.5 5h-9.3z" fill="#fff" stroke="#111" stroke-width="1.1" stroke-linejoin="round"/><path d="M249.6 46.2h5.6M248.8 47.7h5.6" stroke="#666" stroke-width=".7"/>
<path d="M243.4 52.2l2.6-2.6h12.6l1.4 1.6v4l-2.8 2.6h-12.4l-1.4-1.6z" fill="#fff" stroke="#111" stroke-width="1.3" stroke-linejoin="round"/><path d="M244.2 51.4h15" stroke="#3a3a3a" stroke-width="1.8"/><path d="M244.6 56.6h12.2" stroke="#111" stroke-width=".9"/><path d="M245.6 59.2h11" stroke="#111" stroke-width="1.2"/><rect x="250.6" y="54" width="3.6" height="1.3" fill="#d8d800"/>
<path d="M268.5 45.6v-6.1h7" stroke="#222" stroke-width="1" fill="none"/><path d="M270 40.6l4.2 4.2M274.2 40.6l-4.2 4.2" stroke="#111" stroke-width="1.2" fill="none"/>
<rect x="270.8" y="47.9" width="18" height="10.1" fill="#fff" stroke="#111" stroke-width="1.5"/>
<text x="272.2" y="56.5" font-size="9.8" fill="#111" stroke="#111" stroke-width=".35" textLength="15.4" lengthAdjust="spacingAndGlyphs">1:50</text>
<path d="M296.6 59.5v-20h7.2" stroke="#222" stroke-width="1" fill="none"/>
<path d="M296.6 41.6h22.6v17.9h-22.6z" fill="#fff" stroke="#111" stroke-width="1.3"/><path d="M299.4 53.2h14.8v-11.6M304.4 46.4h-4.6" fill="none" stroke="#111" stroke-width="1"/>
<path d="M299 42.2l3.2 3.2M302.2 42.2l-3.2 3.2" stroke="#111" stroke-width="1.1" fill="none"/>
<path d="M315.3 43v9" stroke="#b060d0" stroke-width="1.6" stroke-dasharray="1.5 1"/><path d="M317 43v9" stroke="#c0c040" stroke-width="1" stroke-dasharray="1 1.5"/>
<rect x="300.2" y="54.6" width="4" height="3.6" fill="#ddd" stroke="#111" stroke-width=".7"/><text x="309.8" y="58.2" font-size="4.6" font-weight="bold" fill="#111">100'</text>
<path d="M324.6 41.6h19.6l4 4v13.9h-23.6z" fill="#fff" stroke="#111" stroke-width="1.4" stroke-linejoin="round"/><path d="M344.2 41.6v4h4" fill="none" stroke="#111" stroke-width="1"/>
<g stroke="#111" stroke-width="1" fill="none"><path d="M328.6 44.6l2-1.8l4 4l-2 2z"/><path d="M333.6 42.6l4.6 4.6M337.6 42.6l2.6 2.4l2-2"/><path d="M329.6 56.6L343 45M332 57.4L343.6 47M335 57.4L343.8 49.4" stroke-width="1.1" stroke-dasharray="5 1"/><path d="M340.4 55l2.4 1.6l-1.8 1.6"/></g>
<path d="M361.8 58.4h14.4l3 3.6h-20.4z" fill="#a6a6a6"/><rect x="357.2" y="39" width="23.6" height="19.4" rx="2" fill="#a0a0a0"/><rect x="359.2" y="40.9" width="19.6" height="15.6" fill="#fff"/>
<path d="M390.1 58.4h14.4l3 3.6h-20.4z" fill="#a6a6a6"/><rect x="385.5" y="39" width="23.6" height="19.4" rx="2" fill="#a0a0a0"/><rect x="387.5" y="40.9" width="19.6" height="15.6" fill="#fff"/>
<path d="M418.5 58.4h14.4l3 3.6h-20.4z" fill="#a6a6a6"/><rect x="413.9" y="39" width="23.6" height="19.4" rx="2" fill="#a0a0a0"/><rect x="415.9" y="40.9" width="19.6" height="15.6" fill="#fff"/>
<path d="M446.7 58.4h14.4l3 3.6h-20.4z" fill="#a6a6a6"/><rect x="442.1" y="39" width="23.6" height="19.4" rx="2" fill="#a0a0a0"/><rect x="444.1" y="40.9" width="19.6" height="15.6" fill="#fff"/>
<path d="M474.9 58.4h14.4l3 3.6h-20.4z" fill="#a6a6a6"/><rect x="470.3" y="39" width="23.6" height="19.4" rx="2" fill="#a0a0a0"/><rect x="472.3" y="40.9" width="19.6" height="15.6" fill="#fff"/>
<path d="M503.1 58.4h14.4l3 3.6h-20.4z" fill="#a6a6a6"/><rect x="498.5" y="39" width="23.6" height="19.4" rx="2" fill="#a0a0a0"/><rect x="500.5" y="40.9" width="19.6" height="15.6" fill="#fff"/>
<g stroke="#111" stroke-width="1.1" fill="none"><path d="M361 46v-3.4h3.4M361 42.6l4.2 4.2M377 46v-3.4h-3.4M377 42.6l-4.2 4.2M361 51.4v3.4h3.4M361 54.8l4.2-4.2M377 51.4v3.4h-3.4M377 54.8l-4.2-4.2"/></g>
<path d="M390.4 54h5.2" stroke="#111" stroke-width="1.3"/><path d="M399.3 43h3.6v3.4h-3.6z" fill="#111"/><rect x="400.2" y="43.8" width="1.5" height="1.6" fill="#fff"/><path d="M398.6 46.6h4.6l.6 4.6l-3 1.2l-2.4 1.8l-3-.2l3-3.4z" fill="#111"/><path d="M399.4 47.6l1.6.6l-.8 2.6l-2.8 2.6l-1.2-.2l2.8-2.8z" fill="#f2ea10"/>
<path d="M418.6 48.6l5.6-4v2.4h8.4v3.4h-8.4v2.4z" fill="#fff" stroke="#111" stroke-width="1.2" stroke-linejoin="miter"/>
<path d="M461.2 48.6l-5.6-4v2.4h-8.4v3.4h8.4v2.4z" fill="#fff" stroke="#111" stroke-width="1.2" stroke-linejoin="miter"/>
<g stroke="#111" fill="none"><circle cx="480.7" cy="48.2" r="4.2" stroke-width="1.3"/><path d="M483.8 51.4l4.6 4" stroke-width="2"/><path d="M478.2 48.2h5M480.7 45.7v5" stroke-width="1.7"/></g>
<g stroke="#111" fill="none"><circle cx="508.9" cy="48.2" r="4.2" stroke-width="1.3"/><path d="M512 51.4l4.6 4" stroke-width="2"/><path d="M506.4 48.2h5" stroke-width="1.7"/></g>
<path d="M538.6 56.4h8.4q3.4 0 3.4-3.4v-3.2q0-3.4-3.4-3.4h-5.6" fill="none" stroke="#ff10ff" stroke-width="2.7"/><path d="M534.4 46.4l6.2-4.6v9.2z" fill="#ff10ff"/>
<path d="M576.8 56.4h-8.4q-3.4 0-3.4-3.4v-3.2q0-3.4 3.4-3.4h5.6" fill="none" stroke="#ff10ff" stroke-width="2.7"/><path d="M580.2 46.4l-6.2-4.6v9.2z" fill="#ff10ff"/>
<path d="M596.7 53.6h8.2M600.8 49.5v8.2" stroke="#f01010" stroke-width="1.8" fill="none"/>
<text x="605.8" y="54.6" font-size="15" font-weight="bold" fill="#111" textLength="7.8" lengthAdjust="spacingAndGlyphs">?</text>
<path d="M628.3 50.4h8.2M632.4 46.3v8.2" stroke="#f01010" stroke-width="1.8" fill="none"/>
<path d="M651.3 45.2h7.8M655.2 41.3v7.8" stroke="#f01010" stroke-width="1.8" fill="none"/>
<path d="M662.3 50.4h7.8M666.2 46.5v7.8" stroke="#f01010" stroke-width="1.8" fill="none"/>
<path d="M654.4 57h7.8M658.3 53.1v7.8" stroke="#f01010" stroke-width="1.8" fill="none"/>
<path d="M678.4 39.6l7.5 3.7" stroke="#10e8f0" stroke-width="1.6"/><path d="M685.9 43.3l.7 7" stroke="#f010f0" stroke-width="1.7"/><path d="M689.4 55.6l10 5.1" stroke="#10e8f0" stroke-width="1.6"/>
<path d="M683.7 54.9h6.4M686.9 51.7v6.4" stroke="#f01010" stroke-width="1.7" fill="none"/>
<text x="706.4" y="57" font-size="16.4" font-weight="bold" fill="#111" textLength="21.4" lengthAdjust="spacingAndGlyphs">TXT</text>
<path d="M739.3 59.8h20.2" stroke="#111" stroke-width="1.4"/><path d="M739.3 59.8L753 46.2" stroke="#e02020" stroke-width="1.1"/><path d="M753 46.2L758 41" stroke="#888" stroke-width="1"/><path d="M749 50.2l10.4 9.4" stroke="#30d830" stroke-width="1.1"/><path d="M753.6 45.6q6 5 6.2 13.4" stroke="#f020f0" stroke-width="1.2" fill="none"/>
<circle cx="739.3" cy="59.8" r="1.1" fill="#111"/><circle cx="759.5" cy="59.8" r="1.1" fill="#111"/><circle cx="758.2" cy="40.8" r="1.1" fill="#111"/>
<text x="740.4" y="51.2" font-size="7.6" font-weight="bold" fill="#e02020">A</text><text x="747.6" y="59" font-size="7.4" font-weight="bold" fill="#30d830">B</text><text x="755.6" y="50.4" font-size="9" fill="#f020f0">α</text>
<path d="M767.8 40.9h18l3.1 3.1v16.8h-9.4v-7.4h-11.7z" fill="#10ea10" stroke="#111" stroke-width="1.4" stroke-linejoin="round"/>
<text x="771.6" y="50.6" font-size="8.2" font-weight="bold" fill="#111">m</text><text x="778.6" y="47.4" font-size="5.6" font-weight="bold" fill="#111">2</text>
<g stroke="#222" fill="none"><circle cx="803.9" cy="43.7" r="3" stroke-width="1.1"/><circle cx="803.9" cy="43.7" r=".7" fill="#222" stroke="none"/><path d="M804.6 53.3L819.5 38.3" stroke-width="1.1"/><path d="M813.9 50.1h7.4M817.6 46.4v7.4" stroke-width="1.4"/></g>
<text x="800.6" y="62.6" font-size="8.2" fill="#111" textLength="21.6" lengthAdjust="spacing">XYZ</text>
<path d="M827.6 39.1l4.8 4.8M832.4 39.1l-4.8 4.8" stroke="#222" stroke-width="1" fill="none"/>
<path d="M836.3 40l4.8 4.8M841.1 40l-4.8 4.8" stroke="#222" stroke-width="1" fill="none"/>
<path d="M828.2 55.2l4.8 4.8M833 55.2l-4.8 4.8" stroke="#222" stroke-width="1" fill="none"/>
<path d="M848.7 50.1v.1M848.7 54.5v.1M848.7 58.2v.1M848.7 62v.1M850.5 45.2v.1M843.7 57.6v.1M838.7 62v.1M833.7 50v.1M841 50v.1" stroke="#222" stroke-width="1.2" stroke-linecap="square"/>
<path d="M831.3 47.7L837.5 58.8L848 40.2" fill="none" stroke="#f01010" stroke-width="2.5" stroke-linejoin="miter"/>
<path d="M855.5 45.8v-6.3h6.8" stroke="#222" stroke-width="1" fill="none"/>
<path d="M858.5 41.1l3.8 3.8M862.3 41.1l-3.8 3.8" stroke="#222" stroke-width="1" fill="none"/>
<path d="M865.8 47.9l7.2 11.7h-14.6z" fill="none" stroke="#30e030" stroke-width="1.4"/>
<path d="M863 53.1l6 6M869 53.1l-6 6" stroke="#222" stroke-width="1.1" fill="none"/>
<text x="868.8" y="50.2" font-size="10" fill="#111" textLength="9.8" lengthAdjust="spacingAndGlyphs">12</text>
<rect x="881" y="36" width="28" height="27.8" fill="#f4f4f4"/><path d="M881.5 63.8v-27.3h27.5" fill="none" stroke="#d2d2d2" stroke-width="1"/><path d="M881.5 63.5h27.2v-27" fill="none" stroke="#fff" stroke-width="1"/>
<path d="M884.7 45.8L900.8 60.7" stroke="#999" stroke-width="1"/>
<path d="M887.3 55.3l3.4 3.4M890.7 55.3l-3.4 3.4" stroke="#222" stroke-width="1" fill="none"/>
<path d="M895.2 48.4l3.4 3.4M898.6 48.4l-3.4 3.4" stroke="#222" stroke-width="1" fill="none"/>
<text x="898.2" y="47.8" font-size="10" fill="#111" textLength="8.8" lengthAdjust="spacingAndGlyphs">21</text>
</g>
</svg>
</body></html>
